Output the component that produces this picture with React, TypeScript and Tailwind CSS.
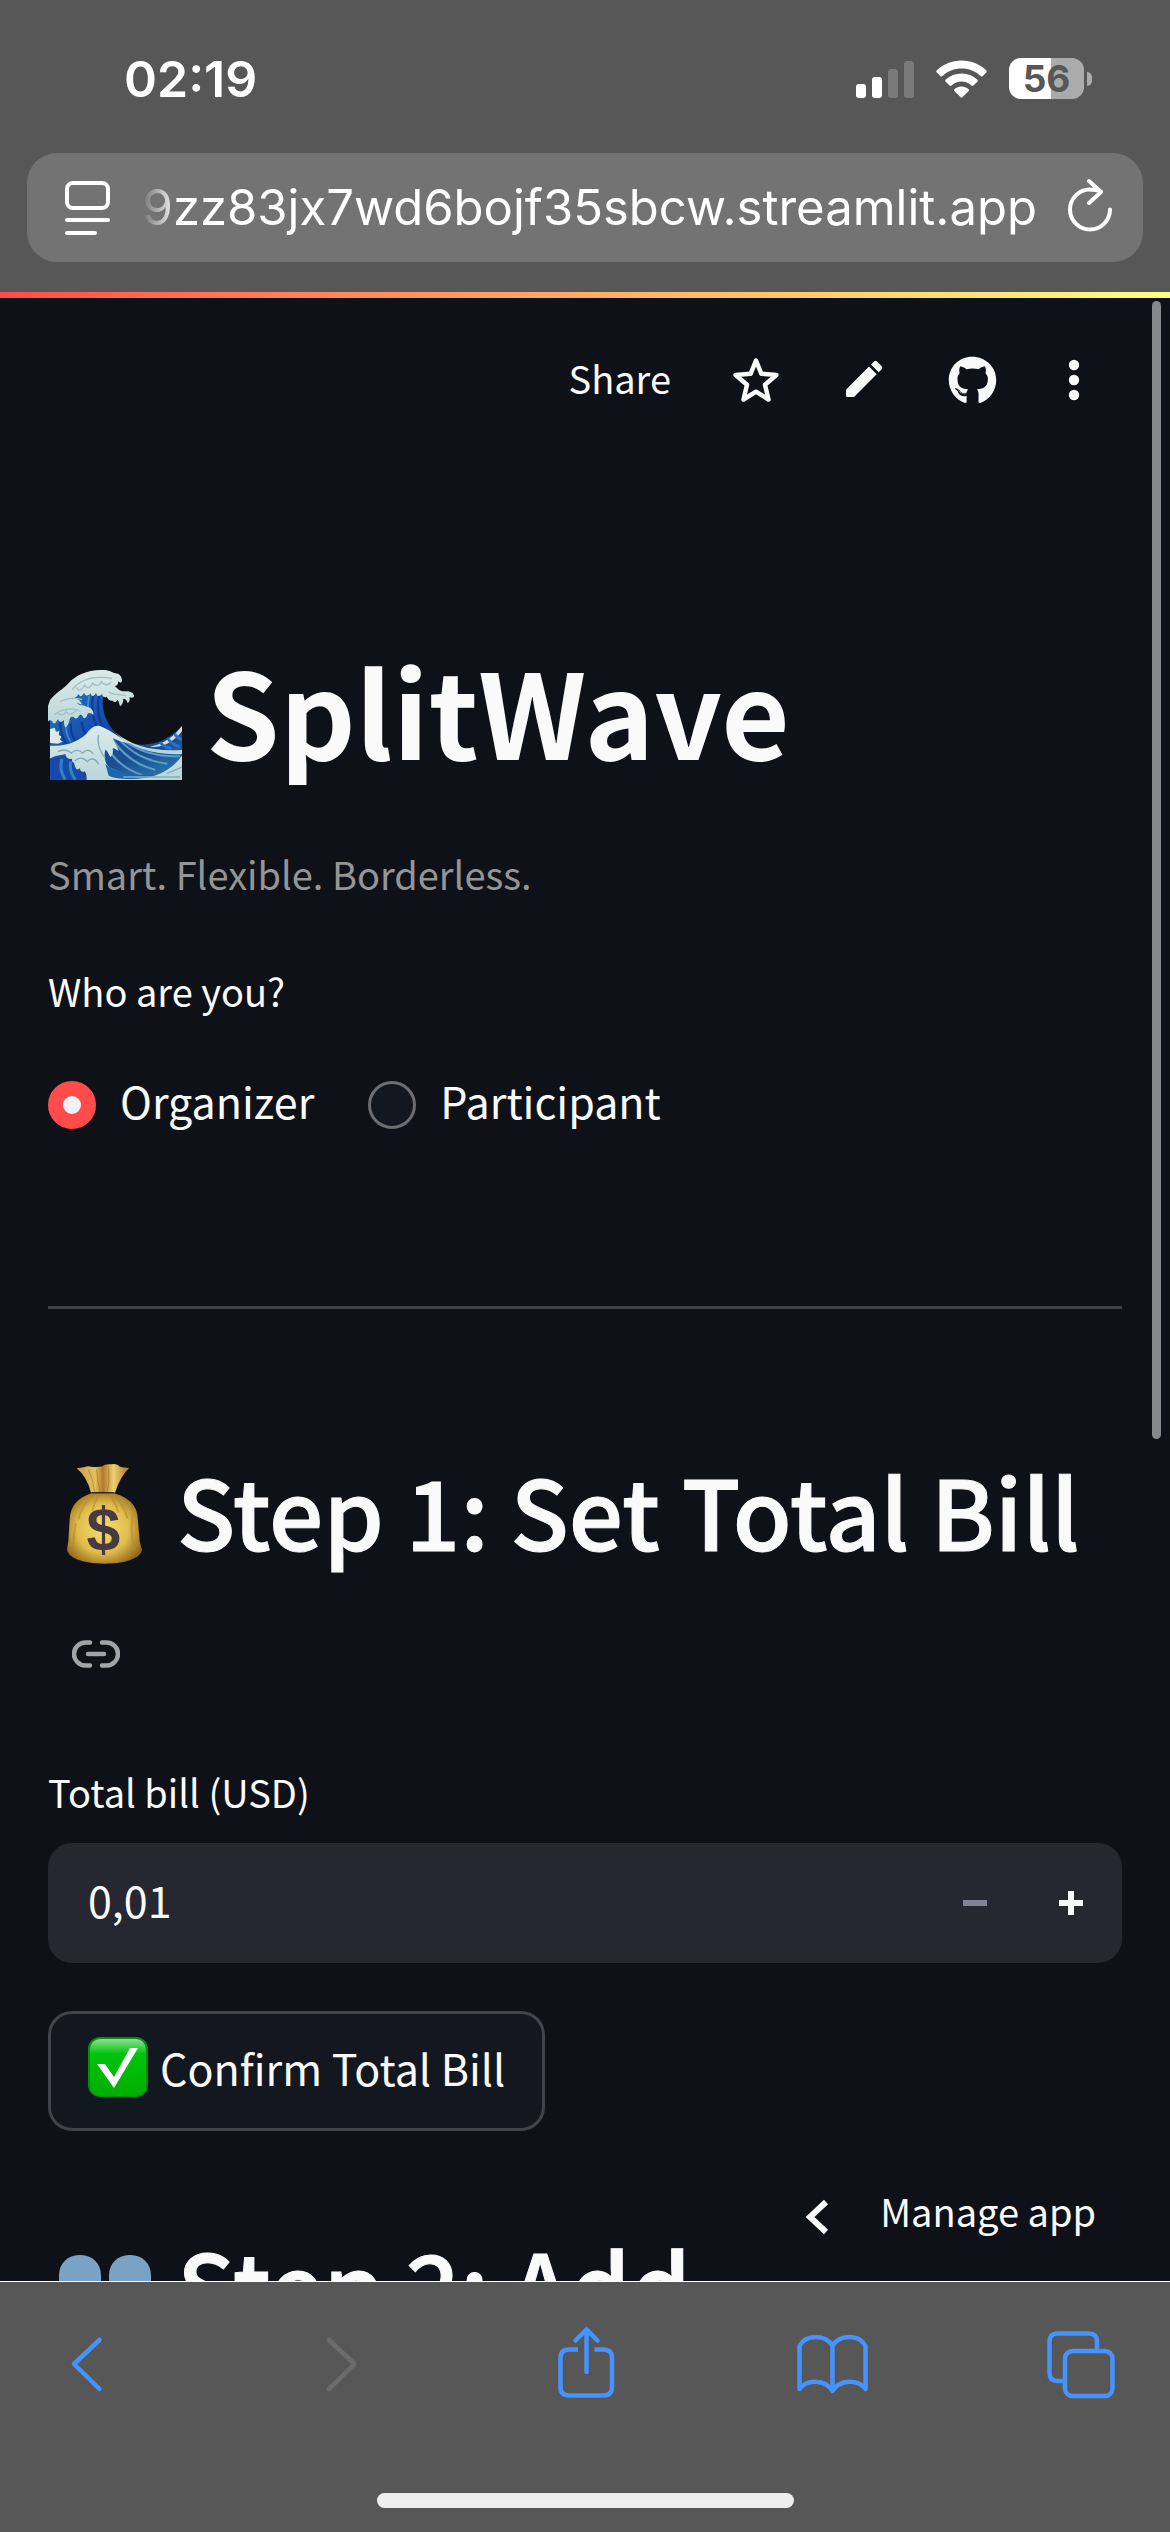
import { useState } from 'react'
import type { ReactNode } from 'react'
import clsx from 'clsx'
import { FaGithub } from 'react-icons/fa'

const roles = ['Organizer', 'Participant']

function StatusBar() {
  return (
    <div className="flex h-[153px] items-center justify-between pt-1 pr-[78px] pl-[124px] text-white">
      <time className="font-['Inter',sans-serif] text-[50px] leading-none font-semibold">
        02:19
      </time>
      <div className="flex items-center gap-[22px]">
        <svg className="h-[38px] w-[58px]" viewBox="0 0 58 38" fill="currentColor">
          <rect x="0" y="24" width="10" height="14" rx="3" />
          <rect x="16" y="17" width="10" height="21" rx="3" />
          <rect x="32" y="9" width="10" height="29" rx="3" fill="#7a7a7a" />
          <rect x="48" y="1" width="10" height="37" rx="3" fill="#7a7a7a" />
        </svg>
        <svg className="h-[38px] w-[51px]" viewBox="0 0 51 38" fill="currentColor">
          <path d="M25.500 .5c9.400 0 18 3.600 24.600 9.700.8.7.8 1.600.1 2.300l-3.400 3.400c-.7.700-1.500.7-2.200 0C39.400 11.300 32.700 8.600 25.500 8.600S11.600 11.300 6.400 15.900c-.7.7-1.500.7-2.200 0L.8 12.500c-.7-.7-.7-1.600.1-2.300C7.500 4.100 16.100.5 25.500.5Z" />
          <path d="M25.500 13.500c6 0 11.500 2.300 15.700 6 .8.7.8 1.600.1 2.300l-3.600 3.500c-.7.700-1.500.7-2.200.1-2.800-2.400-6.200-3.800-10-3.800s-7.200 1.400-10 3.800c-.7.6-1.500.6-2.200-.1l-3.600-3.500c-.7-.7-.7-1.600.1-2.300 4.200-3.700 9.700-6 15.700-6Z" />
          <path d="M25.500 26.500c2.600 0 5 .9 6.900 2.400.8.600.8 1.600.1 2.300l-5.900 5.900c-.7.700-1.500.7-2.200 0l-5.900-5.900c-.7-.7-.7-1.700.1-2.300 1.900-1.500 4.300-2.400 6.900-2.400Z" />
        </svg>
        <div className="flex items-center gap-[3px]">
          <div className="flex h-[41px] w-[75px] items-center justify-center rounded-[12px] bg-linear-to-r from-white from-56% to-[#ababab] to-56% font-['Inter',sans-serif] text-[37px] leading-none font-bold text-[#575757]">
            56
          </div>
          <div className="h-[14px] w-[5px] rounded-r-full bg-[#ababab]" />
        </div>
      </div>
    </div>
  )
}

function AddressBar() {
  return (
    <div className="mx-[27px] flex h-[109px] items-center rounded-[30px] bg-[#737373] pr-[30px] pl-[38px] text-white">
      <button type="button" aria-label="Page settings" className="shrink-0">
        <svg
          className="h-[54px] w-[45px]"
          viewBox="0 0 45 54"
          fill="none"
          stroke="currentColor"
          strokeWidth="4"
          strokeLinecap="round"
        >
          <rect x="2" y="2" width="41" height="25" rx="6" />
          <path d="M2 39h41M2 52h28" />
        </svg>
      </button>
      <input
        type="text"
        aria-label="Address"
        defaultValue="9zz83jx7wd6bojf35sbcw.streamlit.app"
        className="ml-8 h-20 min-w-0 flex-1 bg-transparent mask-linear-90 mask-linear-from-transparent mask-linear-from-0% mask-linear-to-black mask-linear-to-4% text-right font-['Inter',sans-serif] text-[49px] outline-none"
      />
      <button type="button" aria-label="Reload" className="ml-[30px] shrink-0">
        <svg
          className="h-[62px] w-[46px]"
          viewBox="0 0 46 62"
          fill="none"
          stroke="currentColor"
          strokeWidth="4"
          strokeLinecap="round"
          strokeLinejoin="round"
        >
          <path d="M43 32.500a20 20 0 1 1-20-20c3.500 0 7 .5 11 2M22 4l12 11-12 11" />
        </svg>
      </button>
    </div>
  )
}

function ToolbarButton({
  label,
  narrow,
  children
}: {
  label: string
  narrow?: boolean
  children: ReactNode
}) {
  return (
    <button
      type="button"
      aria-label={label}
      className={clsx('flex justify-center', narrow ? 'w-24' : 'w-[108px]')}
    >
      {children}
    </button>
  )
}

function AppToolbar() {
  return (
    <div className="flex h-[164px] items-center justify-end pr-12">
      <button type="button" className="pr-[31px] pb-1 text-[38px] leading-[60px]">
        Share
      </button>
      <ToolbarButton label="Favorite">
        <svg
          className="size-12"
          viewBox="0 0 48 48"
          fill="none"
          stroke="currentColor"
          strokeWidth="4.500"
          strokeLinejoin="round"
        >
          <path d="M24 4.500l5.400 13.300 15 1.200-11.400 9.800 3.500 14.700L24 35.700l-12.500 7.800L15 28.800 3.600 19l15-1.200Z" />
        </svg>
      </ToolbarButton>
      <ToolbarButton label="Edit">
        <svg className="size-12" viewBox="0 0 48 48" fill="currentColor">
          <path d="M6 33.700 29 10.500l7.700 7.700L14 41H7.300Q6 41 6 39.700ZM31 8.500l3-3q1.500-1.300 3 0l4.700 4.700q1.300 1.500 0 3l-3 3Z" />
        </svg>
      </ToolbarButton>
      <ToolbarButton label="View source">
        <FaGithub className="size-[49px]" />
      </ToolbarButton>
      <ToolbarButton label="More" narrow>
        <svg className="size-12" viewBox="0 0 48 48" fill="currentColor">
          <circle cx="24" cy="9" r="5.200" />
          <circle cx="24" cy="24" r="5.200" />
          <circle cx="24" cy="39" r="5.200" />
        </svg>
      </ToolbarButton>
    </div>
  )
}

function WaveIcon() {
  return (
    <svg className="h-[110px] w-[134px] shrink-0" viewBox="24 45 402 330" aria-hidden="true">
      <defs>
        <linearGradient id="deep" x1="0" y1="0" x2="1" y2="1">
          <stop offset="0" stopColor="#2a7fb0" />
          <stop offset=".5" stopColor="#1550b4" />
          <stop offset="1" stopColor="#12306f" />
        </linearGradient>
        <linearGradient id="swell" x1="0" y1="0" x2="1" y2="1">
          <stop offset="0" stopColor="#1c4fae" />
          <stop offset=".6" stopColor="#1b4d8e" />
          <stop offset="1" stopColor="#2e86b8" />
        </linearGradient>
        <linearGradient id="foam" x1="0" y1="0" x2="0" y2="1">
          <stop offset="0" stopColor="#dcebe9" />
          <stop offset="1" stopColor="#b9d6da" />
        </linearGradient>
      </defs>
      {/* curling wall of water */}
      <path
        d="M30 135C60 95 120 80 195 105c-10 25-10 60 5 90 18 38 48 60 78 70l-40 60H30Z"
        fill="url(#deep)"
      />
      <path
        d="M180 112c-12 45-6 90 20 120M160 118c-8 40-4 70 12 100M62 195c-4 30 2 50 18 72M92 205c0 26 6 44 18 58M125 200c2 20 8 34 20 44"
        stroke="#123b92"
        strokeWidth="7"
        fill="none"
      />
      <path d="M148 122c-6 20-6 34 0 50M78 200c-2 26 2 44 14 60" stroke="#3a93c8" strokeWidth="5" fill="none" />
      {/* crest */}
      <path
        d="M30 136C52 108 66 106 84 86 108 60 140 46 182 45c24-2 36 8 44 10 12 0 20 10 20 22-2 8-8 6-12 2 2 10-4 14-10 14 10 8 14 16 28 16 14-2 30 2 30 14-2 8-8 4-14 4 4 8-2 18-6 16-2-10-8-12-12-12 0 10-4 20-10 22-4-8-2-14-8-18-4 8-10 8-14 2-8 2-14-4-18-12-8 4-12 0-14-8-8 10-16 6-18-4-6 12-14 14-16 2-8 10-16 8-20-2-6 12-12 14-16 4-8 12-14 12-20 8 14 4 26 10 30 24-6-2-12-6-16-4 8 8 20 4 30 10 14 2 22 12 20 26-6-8-14-8-18-4 0 8-6 14-12 12-2-8-8-12-12-8-4 8-8 12-14 8-4-4-8-6-14 0-2 10-6 26-14 28-6-8-2-18-6-22-6 10-12 6-16-2-6 8-8 14-14 12-4-8-8-12-14-8-6 8-14 6-18 0Z"
        fill="url(#foam)"
      />
      <path
        d="M96 104c24-30 60-44 120-34M60 140c26-14 44-14 66-6M44 178c22-14 50-22 76-10M108 98c10 14 20 4 26-8 8 14 18 8 24-6 10 12 20 8 26-4 8 14 22 10 30 2M206 110c14 12 34 6 52 12M52 172c10 12 20 8 26-2 10 12 22 8 30-4"
        stroke="#a3c0c6"
        strokeWidth="4"
        fill="none"
      />
      <path d="M30 222l14-4 4 12 10-2-2 12 8 4-4 10 8 6-14 6-24-2Z" fill="#dcebe9" />
      {/* front swell */}
      <path
        d="M30 272c50 4 86-14 108-34 14-20 30-30 44-24 26 10 60 44 108 54 58 6 100-18 136-56v163H30Z"
        fill="url(#swell)"
      />
      <path
        d="M330 275c40-8 70-28 96-62v16c-30 36-60 50-96 46Z"
        fill="#cfe3e3"
      />
      <path d="M360 262c8 10 20 16 34 18M384 250c6 12 18 20 34 24M404 236c4 10 10 14 22 18" stroke="#2e70c8" strokeWidth="9" fill="none" />
      <path
        d="M215 250c30 44 70 80 130 94M232 248c40 44 84 70 150 78M250 256c50 34 100 50 170 48M196 262c20 50 56 80 110 98"
        stroke="#5d9dc8"
        strokeWidth="6"
        fill="none"
      />
      <path
        d="M225 232c50 40 110 58 201 53v12c-80 4-150-14-201-65Z"
        fill="#b8d7dc"
      />
      <path
        d="M30 272c50 4 86-14 108-34 14-20 30-30 44-24 34 14 62 40 92 50-20 2-36-6-56-14 6 16 14 24 18 38-8-4-12-8-18-8 2 12 0 20-6 26-6-6-8-18-16-22-4 16-2 30 4 44 8 12 22 14 38 22 36 22 84 22 110 10 34-10 56-30 78-58v73H140c0-10 0-20-6-26-8 4-14 0-14-10-8 8-14 4-16-6-6-4-8-12-8-22-12 4-18-4-20-14-14 6-28 2-46 14Z"
        fill="url(#foam)"
      />
      <path
        d="M196 326c30 30 110 40 160 30-40 20-120 20-150 6Z"
        fill="#1d65ae"
      />
      <path
        d="M54 290c14-8 28-6 40 4 10-10 22-10 34 0 10-12 22-10 32 2M104 318c12-12 26-12 38 2 12-14 26-8 34 8M176 240c-6 30 4 50 20 70M380 356l46-20M250 366h170"
        stroke="#7fadbd"
        strokeWidth="4"
        fill="none"
      />
      <path d="M30 312c22-6 54-4 72 12 4 20 16 30 34 50H30Z" fill="#1549ae" />
      <path d="M66 312c-6 20-2 44 10 62M92 320c-4 20 4 40 14 54" stroke="#2d86b4" strokeWidth="9" fill="none" />
    </svg>
  )
}

function MoneyBagIcon() {
  return (
    <svg className="size-[116px] shrink-0" viewBox="24 27 348 348" aria-hidden="true">
      <defs>
        <radialGradient id="bag" cx=".48" cy=".5" r=".58">
          <stop offset="0" stopColor="#f6df78" />
          <stop offset=".6" stopColor="#e0bd4c" />
          <stop offset="1" stopColor="#94691d" />
        </radialGradient>
        <linearGradient id="neck" x1="0" x2="1">
          <stop offset="0" stopColor="#c99d50" />
          <stop offset=".35" stopColor="#e3c35c" />
          <stop offset=".5" stopColor="#b07a2a" />
          <stop offset=".7" stopColor="#edcf74" />
          <stop offset="1" stopColor="#a87328" />
        </linearGradient>
      </defs>
      <path
        d="M110 55q12-2 22-3 10-5 22-2 18 3 34-1 5-8 28-6 16-3 24 7 14 4 28 3-26 24-43 75h-72q-12-48-43-73Z"
        fill="url(#neck)"
      />
      <path d="M170 58q2 34 10 68M206 54q4 40-4 70M146 60q14 30 18 66" stroke="#a06c24" strokeWidth="3" fill="none" opacity=".6" />
      <path
        d="M154 130h69c42 12 68 36 70 72l6 70c4 20 8 24 6 31-10 26-58 38-111 38-58 0-104-14-112-38-2-8 2-20 3-30l4-64c2-40 22-64 65-79Z"
        fill="url(#bag)"
      />
      <path
        d="M160 132c-24 22-38 46-44 76M178 132c-10 18-16 24-20 50M206 132c16 18 26 44 30 56M218 134c24 20 38 40 44 72M280 190c-10 40-4 80 4 110M108 220c-8 30-8 50-6 78"
        stroke="#b58a2e"
        strokeWidth="6"
        fill="none"
        opacity=".55"
      />
      <path d="M154 128h69" stroke="#1c140a" strokeWidth="3" />
      <text
        x="190"
        y="300"
        textAnchor="middle"
        fill="#463b40"
        className="font-['Liberation_Sans',sans-serif] text-[182px] font-bold"
      >
        $
      </text>
    </svg>
  )
}

function PeopleIcon() {
  return (
    <svg className="size-[116px] shrink-0" viewBox="0 0 116 116" fill="#7aa2c4" aria-hidden="true">
      <rect x="11" y="22" width="42" height="64" rx="20" />
      <rect x="61" y="22" width="42" height="64" rx="20" />
      <path d="M2 112q4-24 30-26 20 0 26 12 8-12 26-12 26 2 30 26Z" />
    </svg>
  )
}

function CheckIcon() {
  return (
    <svg className="size-[60px] shrink-0" viewBox="0 0 60 60" aria-hidden="true">
      <defs>
        <linearGradient id="gloss" x1="0" y1="0" x2="0" y2="1">
          <stop offset="0" stopColor="#8ee08e" />
          <stop offset=".26" stopColor="#00c40c" />
          <stop offset="1" stopColor="#00ae00" />
        </linearGradient>
      </defs>
      <rect width="60" height="60" rx="12" fill="#078d10" />
      <rect x="2" y="2" width="56" height="57" rx="10" fill="url(#gloss)" />
      <path d="M9 27h8l9 13 16-29h8L26 51Z" fill="#fff" />
    </svg>
  )
}

function StepHeading({ icon, children }: { icon: ReactNode; children: ReactNode }) {
  return (
    <h2 className="flex items-end gap-[13px] text-[96px] leading-[130px] font-medium whitespace-nowrap [-webkit-text-stroke:1px]">
      {icon}
      {children}
    </h2>
  )
}

function RoleRadios() {
  const [role, setRole] = useState(roles[0])

  return (
    <fieldset className="mt-[57px]">
      <legend className="text-[38px] leading-[60px]">Who are you?</legend>
      <div className="mt-[50px] flex gap-[54px]">
        {roles.map(r => (
          <label key={r} className="flex items-end gap-6 text-[43px] leading-[58px]">
            <input
              type="radio"
              name="role"
              value={r}
              checked={role === r}
              onChange={() => setRole(r)}
              className="size-12 appearance-none rounded-full border-3 border-[#6c6e72] bg-[#131720] checked:border-[15px] checked:border-[#ff4b4b] checked:bg-[#f0f2f6]"
            />
            {r}
          </label>
        ))}
      </div>
    </fieldset>
  )
}

function BillForm() {
  return (
    <form>
      <label htmlFor="bill" className="mt-[78px] block text-[38px] leading-[60px]">
        Total bill (USD)
      </label>
      <div className="mt-[21px] flex h-[120px] items-center rounded-3xl bg-[#262730]">
        <input
          id="bill"
          type="text"
          inputMode="decimal"
          defaultValue="0,01"
          className="h-full min-w-0 flex-1 bg-transparent pb-2 pl-10 text-[43px] outline-none"
        />
        <button
          type="button"
          aria-label="Decrease"
          className="flex h-full w-24 items-center justify-center text-[#808495]"
        >
          <span className="h-[6px] w-6 bg-current" />
        </button>
        <button
          type="button"
          aria-label="Increase"
          className="mr-[3px] flex h-full w-24 items-center justify-center"
        >
          <svg className="size-6" viewBox="0 0 24 24" fill="currentColor">
            <path d="M9 0h6v9h9v6h-9v9H9v-9H0V9h9Z" />
          </svg>
        </button>
      </div>
      <button
        type="button"
        className="mt-12 flex h-[120px] items-center gap-3 rounded-3xl border-3 border-[#41444c] bg-[#131720] px-[37px] pb-2 text-[43px]"
      >
        <CheckIcon />
        Confirm Total Bill
      </button>
    </form>
  )
}

function BrowserButton({
  label,
  disabled,
  children
}: {
  label: string
  disabled?: boolean
  children: ReactNode
}) {
  return (
    <button type="button" aria-label={label} disabled={disabled} className="disabled:text-[#6c6c6c]">
      <svg
        className="size-20"
        viewBox="0 0 80 80"
        fill="none"
        stroke="currentColor"
        strokeWidth="4.500"
        strokeLinecap="round"
        strokeLinejoin="round"
      >
        {children}
      </svg>
    </button>
  )
}

function BrowserToolbar() {
  return (
    <footer className="shrink-0 border-t border-white bg-[#575757] pb-6 text-[#4593ff]">
      <nav className="flex h-[164px] items-center justify-between pr-[49px] pl-[46px]">
        <BrowserButton label="Back">
          <path d="M53.500 16 28 40l25.500 25" />
        </BrowserButton>
        <BrowserButton label="Forward" disabled>
          <path d="M34 16l25.500 24L34 65" />
        </BrowserButton>
        <BrowserButton label="Share">
          <path d="M34 25.500h-9q-8.500 0-8.500 8.500v29q0 8.500 8.500 8.500h34.500q8.500 0 8.500-8.500V34q0-8.500-8.500-8.500h-9" strokeLinecap="butt" />
          <path d="M42.500 48V6M31.500 16.500 42.500 5.500l11 11" />
        </BrowserButton>
        <BrowserButton label="Bookmarks">
          <path d="M40.500 22C34 10.500 14 9.500 7.500 22v43C15 55 33 55 40.500 67 48 55 66 55 73.500 65V22C67 9.500 47 10.500 40.500 22v45" />
        </BrowserButton>
        <BrowserButton label="Tabs">
          <rect x="24" y="27" width="47.500" height="45" rx="7.500" />
          <path d="M56 27v-9.500q0-8-8-8H16.500q-8 0-8 8v31.500q0 8 8 8H24" />
        </BrowserButton>
      </nav>
      <div className="mx-auto mt-[47px] h-[15px] w-[417px] rounded-full bg-[#eee]" />
    </footer>
  )
}

export default function App() {
  return (
    <div className="flex h-screen flex-col overflow-hidden bg-[#0e1117] font-['Noto_Sans_CJK_JP','Noto_Sans',sans-serif] text-[#fafafa]">
      <header className="shrink-0 bg-[#575757] pb-[30px]">
        <StatusBar />
        <AddressBar />
      </header>
      <div className="h-[6px] shrink-0 bg-linear-to-r from-[#ff4b4b] to-[#fffd80]" />

      <div className="relative min-h-0 flex-1 overflow-hidden">
        <AppToolbar />
        <main className="px-12">
          <h1 className="mt-[176px] flex items-end gap-6 text-[118px] leading-[142px] font-bold">
            <WaveIcon />
            SplitWave
          </h1>
          <p className="mt-16 text-[38px] leading-[60px] text-[#949597]">
            Smart. Flexible. Borderless.
          </p>
          <RoleRadios />
          <hr className="mt-[177px] mb-[136px] border-t-3 border-[#3e4044]" />

          <StepHeading icon={<MoneyBagIcon />}>Step 1: Set Total Bill</StepHeading>
          <a
            href="#step-1"
            aria-label="Link to heading"
            className="mt-[49px] ml-6 flex h-[60px] w-12 items-center text-[#a3a4a6]"
          >
            <svg
              className="h-7 w-12"
              viewBox="0 0 48 28"
              fill="none"
              stroke="currentColor"
              strokeWidth="4.500"
              strokeLinecap="round"
            >
              <path d="M18 2.500h-4.500a11.500 11.500 0 0 0 0 23H18M30 2.500h4.500a11.500 11.500 0 0 1 0 23H30M16 14h16" />
            </svg>
          </a>
          <div className="mb-[88px]">
            <BillForm />
          </div>

          <StepHeading icon={<PeopleIcon />}>Step 2: Add</StepHeading>
        </main>

        <button
          type="button"
          className="absolute right-[74px] bottom-10 flex items-end gap-[45px] bg-[#0e1117] text-[38px] leading-[60px]"
        >
          <svg className="h-12 w-9" viewBox="0 0 36 48" fill="none" stroke="currentColor" strokeWidth="6">
            <path d="M27 9 11 24l16 15" />
          </svg>
          Manage app
        </button>
        <div className="absolute top-[3px] right-[9px] h-[1138px] w-[9px] rounded-full bg-[#87888b]" />
      </div>

      <BrowserToolbar />
    </div>
  )
}
